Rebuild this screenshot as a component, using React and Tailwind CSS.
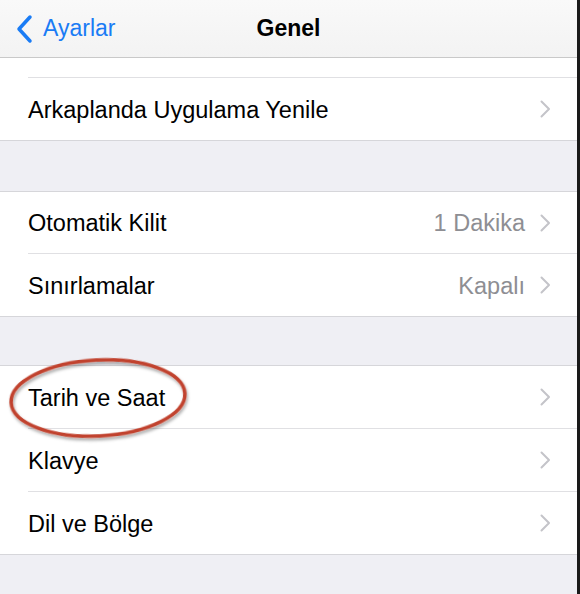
import React from "react";

function Chevron() {
  return (
    <svg width="11" height="18" viewBox="0 0 11 18" className="shrink-0">
      <path d="M1.5 1.5 L9 9 L1.5 16.5" fill="none" stroke="#c4c4c9" strokeWidth="2" strokeLinecap="round" strokeLinejoin="round" />
    </svg>
  );
}

function Row({ label, value, last, tall }) {
  return (
    <div className="pl-[28px]">
      <div className={(tall ? "h-[63px] " : "h-[62px] ") + "flex items-center pr-[26px] " + (last ? "" : "border-b border-[#e0e0e3]")}>
        <span className="flex-1 text-[23.5px] text-black pt-[3px]">{label}</span>
        {value && <span className="text-[23.5px] text-[#8e8e93] mr-[15px] pt-[3px]">{value}</span>}
        <Chevron />
      </div>
    </div>
  );
}

export default function App() {
  return (
    <div
      className="w-[580px] h-[594px] bg-[#efeff4] overflow-hidden relative border-r-[3px] border-[#1a1a1a]"
      style={{ fontFamily: '"Liberation Sans", Arial, sans-serif' }}
    >
      <div className="h-[58px] bg-gradient-to-b from-[#f9f9f9] to-[#f3f3f3] border-b border-[#c9c9c9] grid grid-cols-[1fr_auto_1fr] items-center">
        <div className="flex items-center pl-[16px]">
          <svg width="18" height="30" viewBox="0 0 18 30">
            <path d="M14 3 L3 15 L14 27" fill="none" stroke="#1a7cf5" strokeWidth="3.5" strokeLinecap="round" strokeLinejoin="round" />
          </svg>
          <span className="ml-[9px] text-[23px] text-[#1a7cf5]">Ayarlar</span>
        </div>
        <span className="text-[23px] font-bold text-black">Genel</span>
        <div />
      </div>

      <div className="bg-white border-b border-[#d6d6da]">
        <div className="pl-[28px]">
          <div className="h-[20px] border-b border-[#e0e0e3]" />
        </div>
        <Row label="Arkaplanda Uygulama Yenile" last />
      </div>

      <div className="h-[50px]" />

      <div className="bg-white border-y border-[#d6d6da]">
        <Row label="Otomatik Kilit" value="1 Dakika" />
        <Row label="Sınırlamalar" value="Kapalı" last />
      </div>

      <div className="h-[48px]" />

      <div className="bg-white border-y border-[#d6d6da]">
        <Row label="Tarih ve Saat" tall />
        <Row label="Klavye" tall />
        <Row label="Dil ve Bölge" last />
      </div>

      <svg className="absolute left-0 top-[350px]" width="210" height="100" viewBox="0 0 210 100">
        <defs>
          <filter id="sh" x="-20%" y="-20%" width="140%" height="140%">
            <feDropShadow dx="1" dy="2.5" stdDeviation="1.5" floodColor="#000" floodOpacity="0.35" />
          </filter>
        </defs>
        <ellipse cx="98" cy="48" rx="87" ry="38" fill="none" stroke="#c1432f" strokeWidth="3.5" transform="rotate(-3 98 48)" filter="url(#sh)" />
      </svg>
    </div>
  );
}
